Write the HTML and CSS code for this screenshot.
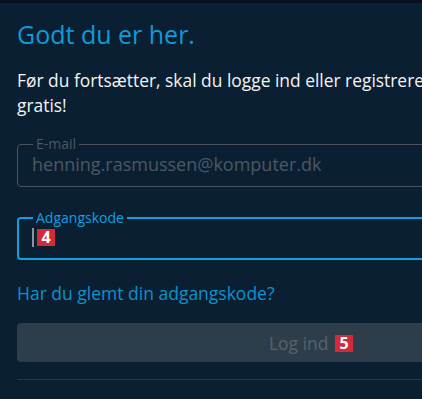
FILE: index.html
```html
<!DOCTYPE html>
<html lang="da">
<head>
    <meta charset="UTF-8">
    <meta name="viewport" content="width=device-width, initial-scale=1.0">
    <title>Log ind</title>
    <link rel="stylesheet" href="styles.css">
</head>
<body>
    <div class="topbar"></div>
    <div class="container">
        <h1>Godt du er her.</h1>

        <p class="intro">Før du fortsætter, skal du logge ind eller registrere dig. Det er helt gratis!</p>

        <fieldset class="field field-filled">
            <legend>E-mail</legend>
            <div class="value">henning.rasmussen@komputer.dk</div>
        </fieldset>

        <fieldset class="field field-active">
            <legend>Adgangskode</legend>
            <div class="value"><span class="caret"></span><span class="badge">4</span></div>
        </fieldset>

        <a class="forgot" href="#">Har du glemt din adgangskode?</a>

        <button class="login">Log ind <span class="badge">5</span></button>

        <hr class="divider">
    </div>
</body>
</html>
```

FILE: styles.css
```css
body {
    font-family: 'Open Sans', 'Noto Sans', sans-serif;
    background: #0b1f32;
    margin: 0;
    padding: 0;
    overflow: hidden;
    color: #f2f4f6;
}

.topbar {
    height: 3px;
    background: #06121d;
}

.container {
    width: 588px;
    padding: 0 0 0 17px;
}

h1 {
    margin: 14px 0 0;
    font-size: 25px;
    font-weight: 400;
    line-height: 34px;
    color: #0e9bd8;
}

.intro {
    margin: 17px 0 0;
    max-width: 550px;
    font-size: 17.4px;
    line-height: 25px;
}

.field {
    margin: 0;
    padding: 0 14px;
    border-radius: 4px;
    box-sizing: border-box;
    min-width: 0;
}

.field legend {
    padding: 0 3px;
    margin-left: 1px;
    font-size: 14px;
    line-height: 14px;
}

.field .value {
    font-size: 18px;
    line-height: 24px;
    margin-top: 1px;
}

.field-filled {
    margin-top: 19px;
    height: 50px;
    border: 1px solid #48535e;
}

.field-filled legend,
.field-filled .value {
    color: #4c5863;
}

.field-active {
    margin-top: 24px;
    height: 49px;
    border: 2px solid #0ea0e0;
    padding-left: 13px;
}

.field-active legend {
    color: #0ea0e0;
}

.field-active .value {
    display: flex;
    align-items: center;
    gap: 3px;
    height: 19px;
    margin-top: 3px;
}

.caret {
    width: 2px;
    height: 19px;
    background: #8a939b;
}

.badge {
    display: inline-block;
    background: #d22a3a;
    color: #ffffff;
    font-weight: 700;
    font-size: 16px;
    line-height: 17px;
    width: 18px;
    text-align: center;
}

.forgot {
    display: block;
    margin-top: 21px;
    font-size: 17.5px;
    line-height: 24px;
    color: #0c92cd;
    text-decoration: none;
}

.login {
    display: block;
    width: 100%;
    margin-top: 18px;
    height: 39px;
    border: none;
    border-radius: 4px;
    background: #2e3d4a;
    color: #56636e;
    font-family: inherit;
    font-size: 17.5px;
}

.login .badge {
    margin-left: 2px;
    vertical-align: 1px;
}

.divider {
    margin: 17px 0 0;
    border: none;
    border-top: 1px solid #28394a;
}
```
